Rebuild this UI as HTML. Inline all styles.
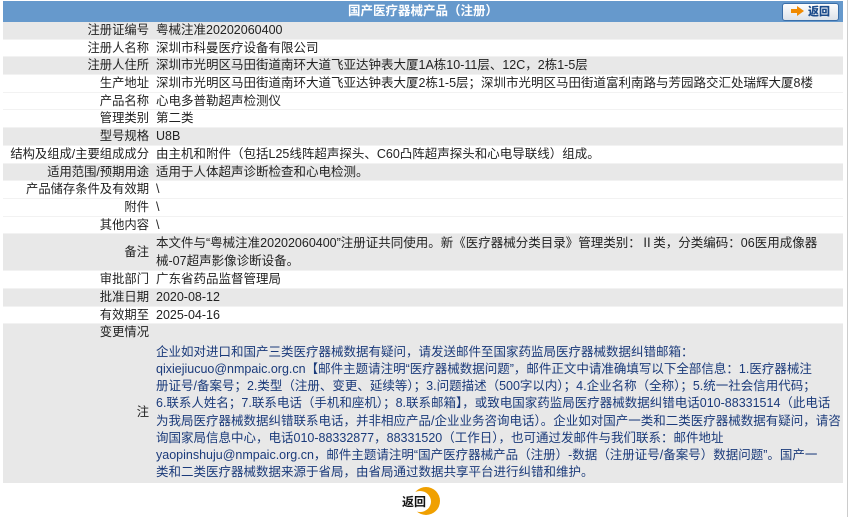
<!DOCTYPE html>
<html><head><meta charset="utf-8"><style>
body{margin:0;background:#fff;font-family:"Liberation Sans","Noto Sans CJK SC",sans-serif;font-size:12px;color:#222;width:850px;height:517px;overflow:hidden;position:relative}
.t{position:absolute;left:3px;top:1px;width:840px}
.hd{height:21px;background:#6699cc;color:#fff;font-weight:bold;text-align:center;line-height:21px;font-size:12.5px;position:relative}
.btn{position:absolute;right:4px;top:2px;width:55px;height:16px;background:linear-gradient(#fdfdfd,#dde3ea);border:1px solid #3a6ea8;border-radius:3px;color:#1a4a8a;font-size:11px;line-height:16px;text-align:left}
.btn i{display:inline-block;width:0;height:0;border-left:7px solid #f08a00;border-top:5px solid transparent;border-bottom:5px solid transparent;margin:0 4px 0 14px;vertical-align:-1px;position:relative}
.btn i:before{content:"";position:absolute;left:-13px;top:-2px;width:6px;height:4px;background:#f08a00}
.r{display:flex;height:17.7px;line-height:17.7px;overflow:hidden;white-space:nowrap;box-shadow:inset 0 -1px 0 #f2f2f2}
.g{background:#e8e8e8}
.l{width:146px;text-align:right;flex:none;font-size:12.3px}
.v{padding-left:7px;flex:1;font-size:12.5px}
.n{color:#1a3a7a}
.back{position:absolute;left:402px;top:487px;width:44px;height:28px}
.back .c{position:absolute;left:10px;top:0;width:28px;height:28px;border-radius:50%;background:#f0a000}
.back .c2{position:absolute;left:7px;top:4px;width:22px;height:21px;border-radius:50%;background:#fff}
.back span{position:absolute;left:0;top:6px;font-weight:bold;font-size:12px;color:#111}
.sb{position:absolute;left:847px;top:0;width:1px;height:517px;background:#ccc}
</style></head><body>
<div class="t">
<div class="hd">国产医疗器械产品（注册）<div class="btn"><i></i><b>返回</b></div></div>
<div class="r g"><div class="l">注册证编号</div><div class="v">粤械注准20202060400</div></div>
<div class="r"><div class="l">注册人名称</div><div class="v">深圳市科曼医疗设备有限公司</div></div>
<div class="r g"><div class="l">注册人住所</div><div class="v">深圳市光明区马田街道南环大道飞亚达钟表大厦1A栋10-11层、12C，2栋1-5层</div></div>
<div class="r"><div class="l">生产地址</div><div class="v">深圳市光明区马田街道南环大道飞亚达钟表大厦2栋1-5层；深圳市光明区马田街道富利南路与芳园路交汇处瑞辉大厦8楼</div></div>
<div class="r"><div class="l">产品名称</div><div class="v">心电多普勒超声检测仪</div></div>
<div class="r"><div class="l">管理类别</div><div class="v">第二类</div></div>
<div class="r g"><div class="l">型号规格</div><div class="v">U8B</div></div>
<div class="r"><div class="l">结构及组成/主要组成成分</div><div class="v">由主机和附件（包括L25线阵超声探头、C60凸阵超声探头和心电导联线）组成。</div></div>
<div class="r g"><div class="l">适用范围/预期用途</div><div class="v">适用于人体超声诊断检查和心电检测。</div></div>
<div class="r"><div class="l">产品储存条件及有效期</div><div class="v">\</div></div>
<div class="r"><div class="l">附件</div><div class="v">\</div></div>
<div class="r"><div class="l">其他内容</div><div class="v">\</div></div>
<div class="r g" style="height:37px;align-items:center"><div class="l">备注</div><div class="v">本文件与“粤械注准20202060400”注册证共同使用。新《医疗器械分类目录》管理类别：Ⅱ类，分类编码：06医用成像器<br>械-07超声影像诊断设备。</div></div>
<div class="r"><div class="l">审批部门</div><div class="v">广东省药品监督管理局</div></div>
<div class="r g"><div class="l">批准日期</div><div class="v">2020-08-12</div></div>
<div class="r"><div class="l">有效期至</div><div class="v">2025-04-16</div></div>
<div class="g" style="height:159px">
<div class="r" style="box-shadow:none"><div class="l">变更情况</div><div class="v"></div></div>
<div class="r" style="height:141px;align-items:center;box-shadow:none"><div class="l">注</div><div class="v n" style="line-height:17.2px">企业如对进口和国产三类医疗器械数据有疑问，请发送邮件至国家药监局医疗器械数据纠错邮箱：<br>qixiejiucuo@nmpaic.org.cn【邮件主题请注明“医疗器械数据问题”，邮件正文中请准确填写以下全部信息：1.医疗器械注<br>册证号/备案号；2.类型（注册、变更、延续等）；3.问题描述（500字以内）；4.企业名称（全称）；5.统一社会信用代码；<br>6.联系人姓名；7.联系电话（手机和座机）；8.联系邮箱】，或致电国家药监局医疗器械数据纠错电话010-88331514（此电话<br>为我局医疗器械数据纠错联系电话，并非相应产品/企业业务咨询电话）。企业如对国产一类和二类医疗器械数据有疑问，请咨<br>询国家局信息中心，电话010-88332877，88331520（工作日），也可通过发邮件与我们联系：邮件地址<br>yaopinshuju@nmpaic.org.cn，邮件主题请注明“国产医疗器械产品（注册）-数据（注册证号/备案号）数据问题”。国产一<br>类和二类医疗器械数据来源于省局，由省局通过数据共享平台进行纠错和维护。</div></div>
</div>
</div>
<div class="back"><div class="c"></div><div class="c2"></div><span>返回</span></div>
<div class="sb"></div>
</body></html>
